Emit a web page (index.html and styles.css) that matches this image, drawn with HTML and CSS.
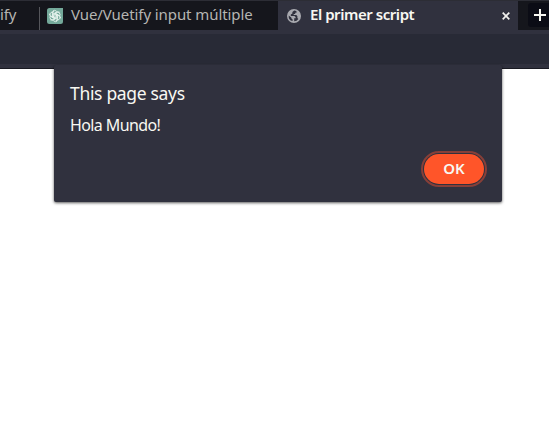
FILE: index.html
```
<!DOCTYPE html>
<html lang="es">
<head>
<meta charset="utf-8">
<title>El primer script</title>
<link rel="stylesheet" href="styles.css">
</head>
<body>
<header class="browser">
  <div class="tabs">
    <div class="tab tab-cut"><span class="label label-cut">ify</span></div>
    <div class="tab tab-chat">
      <svg class="favicon" width="16" height="16" viewBox="0 0 16 16">
        <path d="M2.5 0H16v13.5a2.5 2.5 0 0 1-2.5 2.5h-11A2.5 2.5 0 0 1 0 13.5v-11A2.5 2.5 0 0 1 2.5 0" fill="#74a99a"/>
        <defs><path id="petal" d="M5.4 9.5V5.2a2.6 2.6 0 0 1 4.9-1.2M6.8 8.8V6.3l3.5-2a2.5 2.5 0 0 1 2.5 0"/></defs>
        <g fill="none" stroke="#edf7f3" stroke-width=".8">
          <use href="#petal"/><use href="#petal" transform="rotate(60 8 8)"/><use href="#petal" transform="rotate(120 8 8)"/><use href="#petal" transform="rotate(180 8 8)"/><use href="#petal" transform="rotate(240 8 8)"/><use href="#petal" transform="rotate(300 8 8)"/>
        </g>
      </svg>
      <span class="label label-chat">Vue/Vuetify input múltiple</span>
    </div>
    <div class="tab tab-active">
      <svg class="globe" width="14" height="14" viewBox="0 0 14 14">
        <circle cx="7" cy="7" r="7" fill="#a9aab0"/>
        <path d="M7.2 1.5 5.4 3v1.6L3.8 5.5v1.4h3.6l1.2 1.2v1.2H7.2v2.9a5.3 5.3 0 0 0 4.2-2.3l-1-1V7.2L9.3 6H6.7V4.9h1.5V3.7h1.3V2.2a5 5 0 0 0-2.3-.7M1.7 6.4a5.4 5.4 0 0 0 3.9 5.7v-1.5L4.3 9.3v-.8z" fill="#30313e"/>
      </svg>
      <span class="label label-active">El primer script</span>
      <svg class="close" width="8" height="8" viewBox="0 0 8 8"><path d="m.7.7 6.6 6.6m0-6.6L.7 7.3" stroke="#f1f1ee" stroke-width="1.7"/></svg>
    </div>
    <div class="new-tab"><svg width="12" height="12" viewBox="0 0 12 12"><path d="M6 0v12M0 6h12" stroke="#f8f8f2" stroke-width="2"/></svg></div>
  </div>
  <div class="toolbar"></div>
</header>
<main class="dialog">
  <h1 class="title">This page says</h1>
  <p class="message">Hola Mundo!</p>
  <button class="ok">OK</button>
</main>
</body>
</html>
```

FILE: styles.css
```
* { box-sizing: border-box; }
body {
  margin: 0;
  height: 425px;
  overflow: hidden;
  background: #fff;
  font-family: "Noto Sans", "Open Sans", sans-serif;
}
.browser {
  height: 69px;
  background: #30313e;
  border-top: 1px solid #2c2d35;
  border-bottom: 1px solid #191a22;
}
.tabs {
  display: flex;
  height: 29px;
  background: #15161c;
}
.tab {
  display: flex;
  align-items: center;
  flex: none;
  white-space: nowrap;
}
.tab-cut { width: 39px; }
.tab-chat {
  width: 239px;
  padding-left: 8px;
  background: linear-gradient(#55565b, #55565b) 0 6px / 1px 23px no-repeat;
}
.tab-active {
  width: 240px;
  padding-left: 9px;
  background: #30313e;
}
.label { font-size: 15px; line-height: 26px; padding-bottom: 3px; color: #b5b5b2; }
.label-cut { letter-spacing: -.2px; }
.label-chat { margin-left: 8px; letter-spacing: -.08px; }
.label-active {
  width: 192px;
  margin-left: 9px;
  color: #f8f8f2;
  font-weight: 600;
  letter-spacing: -.45px;
}
.favicon, .globe, .close { display: block; flex: none; }
.new-tab {
  display: flex;
  align-items: center;
  flex: none;
  width: 24px;
  height: 24px;
  margin: 2px 0 0 10px;
  padding-left: 6px;
  border-radius: 3px;
  background: #0b0c15;
}
.toolbar {
  height: 30px;
  margin-top: 4px;
  background: #282a36;
}
.dialog {
  position: relative;
  display: flex;
  flex-direction: column;
  width: 448px;
  height: 137px;
  margin: -4px 0 0 54px;
  padding: 16px;
  border-radius: 2px;
  background: #30313e;
  color: #f8f8f2;
  box-shadow: 0 1px 3px rgba(0, 0, 0, .65);
}
.title {
  margin: 0;
  font-size: 17.5px;
  font-weight: 400;
  line-height: 24px;
  letter-spacing: -.32px;
}
.message {
  margin: 9px 0 0;
  font-size: 16px;
  line-height: 22px;
  letter-spacing: -.6px;
}
.ok {
  align-self: flex-end;
  width: 60px;
  height: 30px;
  margin: 18px 2px 0 0;
  padding: 0 0 2px;
  border: 0;
  border-radius: 15px;
  outline: 2px solid #873f38;
  outline-offset: 1px;
  background: #ff5529;
  color: #f8f8f2;
  font: 600 15px/28px "Noto Sans", sans-serif;
}
```
